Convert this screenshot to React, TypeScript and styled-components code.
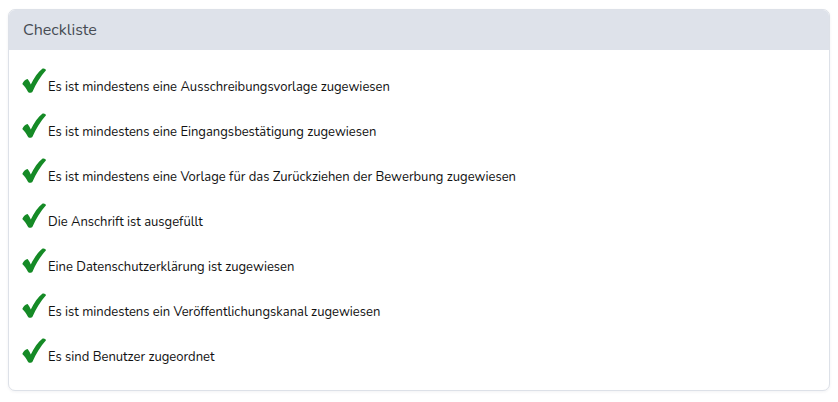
import React from "react";
import styled, { createGlobalStyle } from "styled-components";

const Global = createGlobalStyle`
  html, body { margin: 0; padding: 0; background: #ffffff; }
  body { font-family: "Nunito", "Noto Sans", "Lato", sans-serif; }
`;

const Page = styled.div`
  padding: 9px 8px 11px 8px;
`;

const Card = styled.section`
  border: 1px solid #dde1e8;
  border-radius: 7px;
  overflow: hidden;
  background: #fff;
  box-shadow: 0 1px 3px rgba(30, 40, 60, 0.06);
`;

const Header = styled.header`
  height: 40px;
  box-sizing: border-box;
  display: flex;
  align-items: center;
  padding: 0 14px;
  background: #dee2ea;
  color: #474c54;
  font-size: 16px;
`;

const List = styled.ul`
  list-style: none;
  margin: 0;
  padding: 18px 14px 27px 13px;
  display: flex;
  flex-direction: column;
  gap: 20px;
`;

const Item = styled.li`
  display: flex;
  align-items: flex-end;
  height: 25px;
  font-size: 13px;
  color: #111;
`;

const Text = styled.span`
  line-height: 16px;
  margin-bottom: -2px;
`;

const CheckIcon = styled.svg`
  width: 24px;
  height: 25px;
  margin-right: 2px;
  flex: none;
`;

const Check = () => (
  <CheckIcon viewBox="0 0 24 25">
    <path
      d="M0.3 16 C1.5 13.2 3.6 11.4 5.6 11 C6.8 12.4 8 14.4 8.8 16.4 C12 10 16 4.2 20.6 0.6 C22 0 23.6 0.8 24 2.2 C18.6 8.2 14 15.6 10.6 23.4 C9.6 25.2 6.6 25.4 5.8 23.6 C4.4 20.6 2.6 18.2 0.3 16 Z"
      fill="#158a26"
    />
  </CheckIcon>
);

const items = [
  "Es ist mindestens eine Ausschreibungsvorlage zugewiesen",
  "Es ist mindestens eine Eingangsbestätigung zugewiesen",
  "Es ist mindestens eine Vorlage für das Zurückziehen der Bewerbung zugewiesen",
  "Die Anschrift ist ausgefüllt",
  "Eine Datenschutzerklärung ist zugewiesen",
  "Es ist mindestens ein Veröffentlichungskanal zugewiesen",
  "Es sind Benutzer zugeordnet",
];

export default function App() {
  return (
    <>
      <Global />
      <Page>
        <Card>
          <Header>Checkliste</Header>
          <List>
            {items.map((t) => (
              <Item key={t}>
                <Check />
                <Text>{t}</Text>
              </Item>
            ))}
          </List>
        </Card>
      </Page>
    </>
  );
}
